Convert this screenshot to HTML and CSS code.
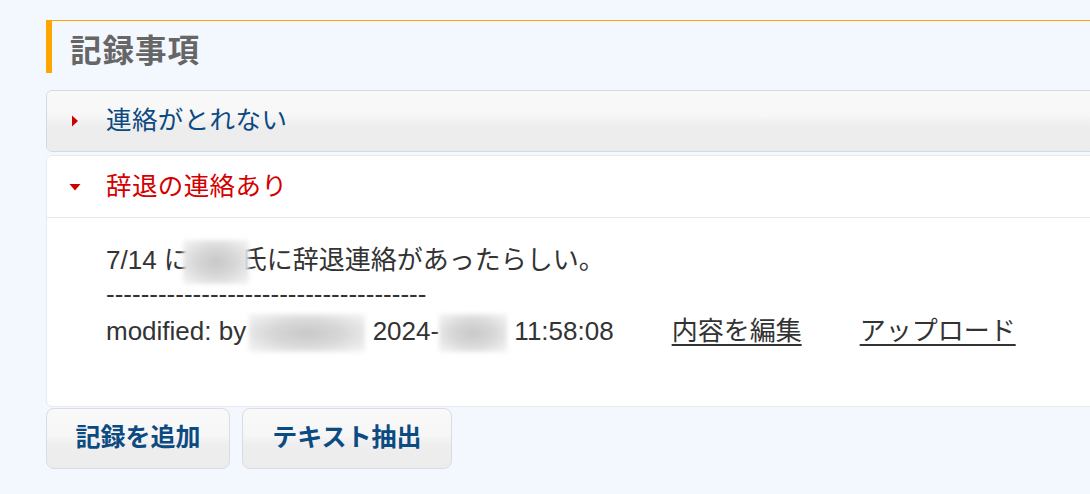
FILE: index.html
```html
<!DOCTYPE html>
<html lang="ja">
<head>
<meta charset="utf-8">
<title>記録事項</title>
<link rel="stylesheet" href="styles.css">
</head>
<body>
<section class="records">
  <h2 class="records-title">記録事項</h2>
  <div class="acc">
    <div class="acc-item">
      <div class="acc-head closed">
        <span class="acc-icon"><svg width="8" height="14" viewBox="0 0 8 14"><path d="M1 1.5 L7 7 L1 12.5 Z" fill="#cc0000"/></svg></span>
        <span class="acc-label">連絡がとれない</span>
      </div>
    </div>
    <div class="acc-item open">
      <div class="acc-head opened">
        <span class="acc-icon"><svg width="12" height="8" viewBox="0 0 12 8"><path d="M0.5 1 L11.5 1 L6 7.5 Z" fill="#cc0000"/></svg></span>
        <span class="acc-label">辞退の連絡あり</span>
      </div>
      <div class="acc-body">
        <p class="line">7/14 に<span class="blur b1"></span>氏に辞退連絡があったらしい。</p>
        <p class="line">-------------------------------------</p>
        <p class="line">modified: by <span class="blur b2"></span> 2024-<span class="blur b3"></span> 11:58:08<a class="link" href="#">内容を編集</a><a class="link" href="#">アップロード</a></p>
      </div>
    </div>
  </div>
  <div class="actions">
    <button class="btn btn-add">記録を追加</button>
    <button class="btn btn-text">テキスト抽出</button>
  </div>
</section>
</body>
</html>
```

FILE: styles.css
```css
html, body {
  margin: 0;
  padding: 0;
  background: #f3f8fe;
  overflow: hidden;
}
body {
  font-family: "Liberation Sans", "Noto Sans CJK JP", sans-serif;
  color: #333;
}
.records {
  width: 1110px;
  padding: 20px 0 0 46px;
}
.records-title {
  margin: 0;
  box-sizing: content-box;
  border-top: 1px solid #ffa500;
  border-left: 6px solid #ffa500;
  padding-left: 18px;
  display: flex;
  align-items: center;
  font-size: 31.5px;
  font-weight: bold;
  color: #666;
  font-family: "Noto Sans CJK JP", sans-serif;
  letter-spacing: 1px;
  line-height: 1;
  padding-top: 4px;
  height: 48px;
}
.acc {
  margin-top: 17px;
  display: flex;
  flex-direction: column;
  gap: 3px;
}
.acc-item {
  border: 1px solid #d5d9de;
  border-radius: 6px;
  overflow: hidden;
}
.acc-item.open {
  border-color: #e6eaef;
  background: #fff;
}
.acc-head {
  height: 60px;
  display: flex;
  align-items: center;
  padding-left: 21px;
  font-size: 25.5px;
  font-family: "Noto Sans CJK JP", sans-serif;
}
.acc-label {
  letter-spacing: 0.4px;
  line-height: 1;
  padding-bottom: 6px;
}
.acc-head.closed {
  background: linear-gradient(#f9f9f9 0%, #f7f7f7 40%, #ededed 60%, #ececec 100%);
  color: #0c4a82;
}
.acc-head.opened {
  background: #fff;
  color: #d40000;
  height: 61px;
  border-bottom: 1px solid #e8e8e8;
}
.acc-icon {
  width: 14px;
  display: flex;
  justify-content: center;
  align-items: center;
  margin-right: 24px;
}
.acc-body {
  padding: 26px 0 58px 59px;
  font-size: 26px;
}
.line {
  margin: 0;
  line-height: 33.5px;
  white-space: nowrap;
}
.blur {
  display: inline-block;
  vertical-align: middle;
  background: radial-gradient(ellipse at center, #c8c8c8 0%, #d8d8d8 45%, #ececec 80%, #f4f4f4 100%);
  filter: blur(2px);
}
.b1 {
  width: 66px;
  height: 44px;
  margin: -6px -8px -6px -7px;
}
.b2 {
  width: 116px;
  height: 38px;
  margin: -4px 0 -4px -4px;
}
.b3 {
  width: 68px;
  height: 38px;
  margin: -4px 0 -4px 0;
}
.link {
  margin-left: 58px;
  color: #333;
  text-decoration: underline;
  text-underline-offset: 4px;
  font-family: "Noto Sans CJK JP", sans-serif;
}
.actions {
  display: flex;
  gap: 12px;
  margin-top: 1px;
}
.btn {
  height: 61px;
  border: 1px solid #d9dce0;
  border-radius: 8px;
  background: linear-gradient(#f9f9f9 0%, #f6f6f6 45%, #eeeeee 60%, #ececec 100%);
  color: #0c4a82;
  font-family: "Noto Sans CJK JP", sans-serif;
  font-weight: bold;
  font-size: 25px;
  line-height: 1;
  padding: 0 0 6px 0;
}
.btn-add { width: 184px; }
.btn-text { width: 210px; }
```
